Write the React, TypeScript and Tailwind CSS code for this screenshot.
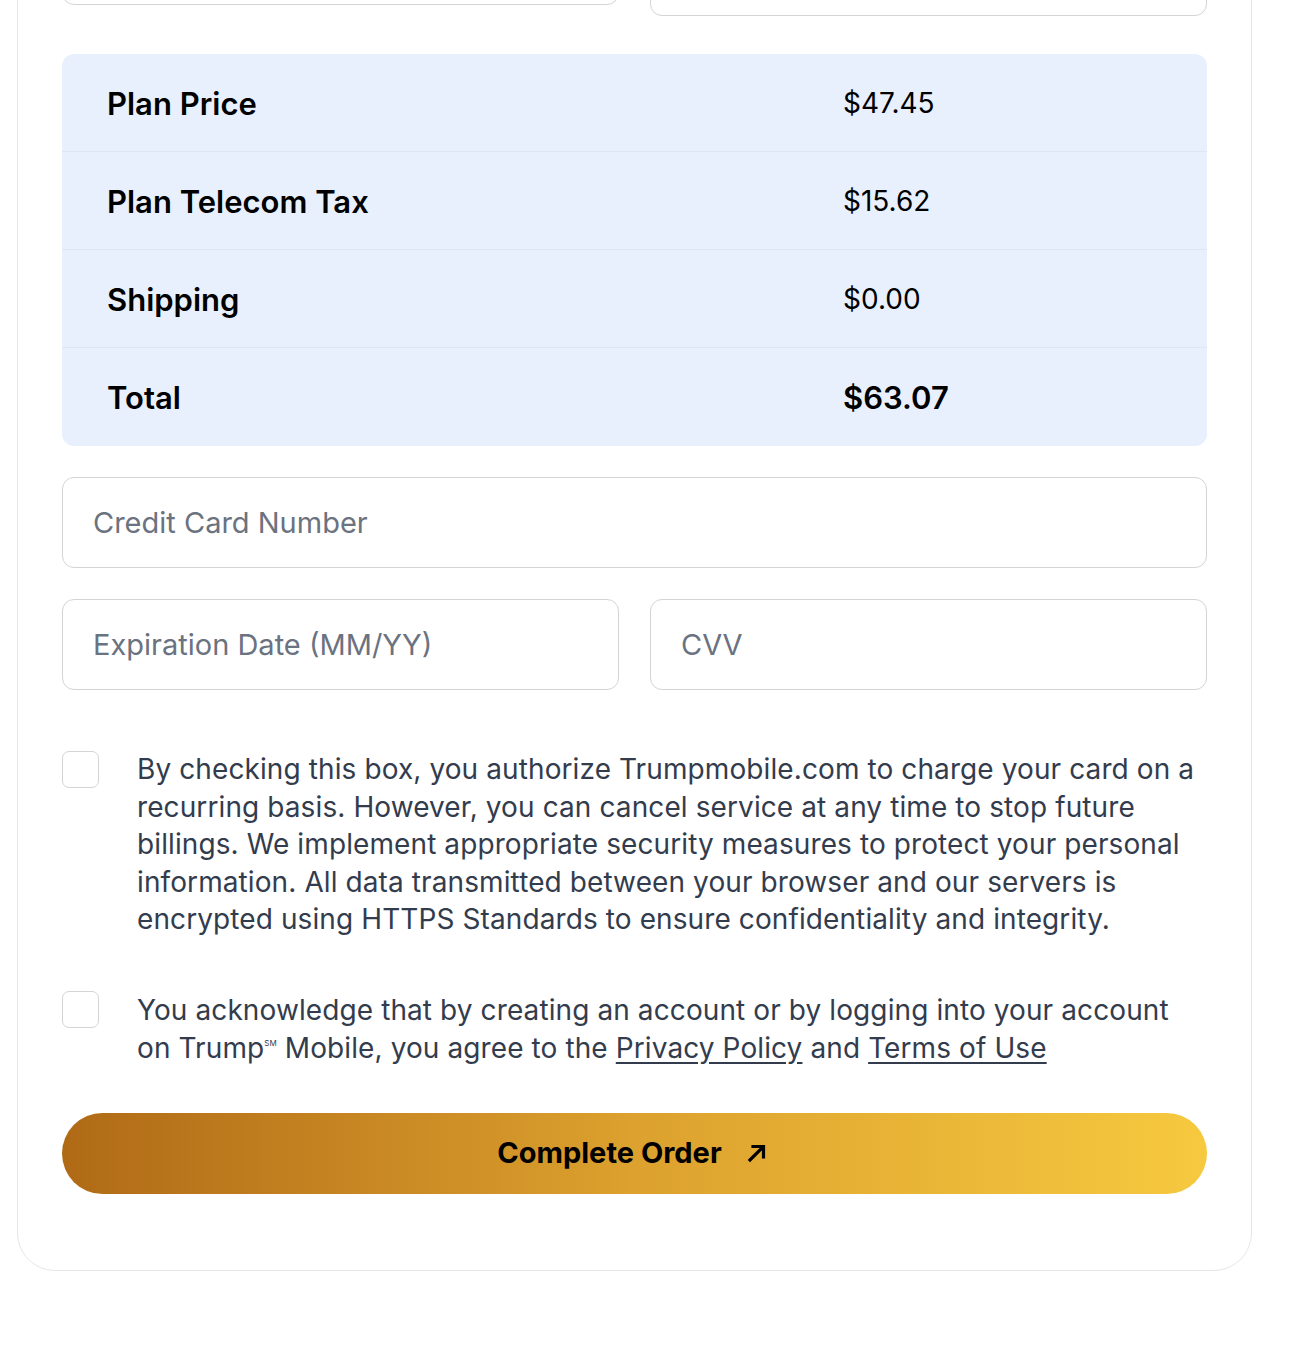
const rows = [
  { label: 'Plan Price', value: '$47.45' },
  { label: 'Plan Telecom Tax', value: '$15.62' },
  { label: 'Shipping', value: '$0.00' },
]

function Field({ placeholder, className = '' }: { placeholder: string; className?: string }) {
  return (
    <input
      type="text"
      placeholder={placeholder}
      className={`w-full h-[91px] px-[30px] rounded-[12px] border border-[#d4d4d8] bg-white text-[29px] text-gray-900 placeholder:text-[#6b7280] focus:outline-none ${className}`}
    />
  )
}

function Check() {
  return (
    <div className="w-[37px] h-[37px] shrink-0 rounded-[7px] border border-[#d4d4d8] bg-white" />
  )
}

function Arrow() {
  return (
    <svg width="22" height="22" viewBox="0 0 22 22" fill="none" stroke="currentColor" strokeWidth="3.2" strokeLinecap="square">
      <path d="M4 18 L16.5 5.5" />
      <path d="M7 4.5 H17.5 V15" />
    </svg>
  )
}

export default function App() {
  return (
    <div className="flex flex-col min-h-[1368px] bg-white font-['Inter','Liberation_Sans',sans-serif]">
      <div className="-mt-[131px] ml-[17px] w-[1235px] rounded-[38px] border border-[#e5e7eb] bg-white px-[44px] pt-[44px] pb-[76px]">
        <div className="grid grid-cols-2 gap-[31px] items-start">
          <div className="h-[91px] rounded-[12px] border border-[#d4d4d8]" />
          <div className="h-[102px] rounded-[12px] border border-[#d4d4d8]" />
        </div>

        <div className="mt-[38px] rounded-[12px] bg-[#e8f0fd] overflow-hidden">
          {rows.map((r) => (
            <div key={r.label} className="grid grid-cols-[736px_1fr] h-[98px] items-center border-b border-[#dde6f3]">
              <span className="pl-[45px] pt-[3px] text-[31px] font-semibold text-black">{r.label}</span>
              <span className="pl-[45px] text-[28px] text-black">{r.value}</span>
            </div>
          ))}
          <div className="grid grid-cols-[736px_1fr] h-[98px] items-center">
            <span className="pl-[45px] pt-[3px] text-[31px] font-semibold text-black">Total</span>
            <span className="pl-[45px] pt-[2px] text-[31px] font-semibold text-black">$63.07</span>
          </div>
        </div>

        <Field placeholder="Credit Card Number" className="mt-[31px]" />
        <div className="mt-[31px] grid grid-cols-2 gap-[31px]">
          <Field placeholder="Expiration Date (MM/YY)" />
          <Field placeholder="CVV" />
        </div>

        <div className="mt-[61px] flex gap-[38px]">
          <Check />
          <p className="text-[28px] leading-[37.5px] tracking-[0.1px] text-[#333c4d]">
            By checking this box, you authorize Trumpmobile.com to charge your card on a recurring basis. However, you
            can cancel service at any time to stop future billings. We implement appropriate security measures to
            protect your personal information. All data transmitted between your browser and our servers is encrypted
            using HTTPS Standards to ensure confidentiality and integrity.
          </p>
        </div>

        <div className="mt-[52px] flex gap-[38px]">
          <Check />
          <p className="text-[28px] leading-[38px] tracking-[0.1px] text-[#333c4d]">
            You acknowledge that by creating an account or by logging into your account on Trump
            <span className="relative -top-[12px] text-[8px] leading-none">SM</span> Mobile, you agree to the{' '}
            <a href="#" className="underline underline-offset-4">Privacy Policy</a> and{' '}
            <a href="#" className="underline underline-offset-4">Terms of Use</a>
          </p>
        </div>

        <button
          type="button"
          className="mt-[46px] w-full h-[81px] rounded-full bg-gradient-to-r from-[#b06a16] via-[#dca12e] to-[#f6c93f] flex items-center justify-center gap-[24px] pr-[4px] text-[29px] font-bold text-black"
        >
          Complete Order
          <Arrow />
        </button>
      </div>
    </div>
  )
}
